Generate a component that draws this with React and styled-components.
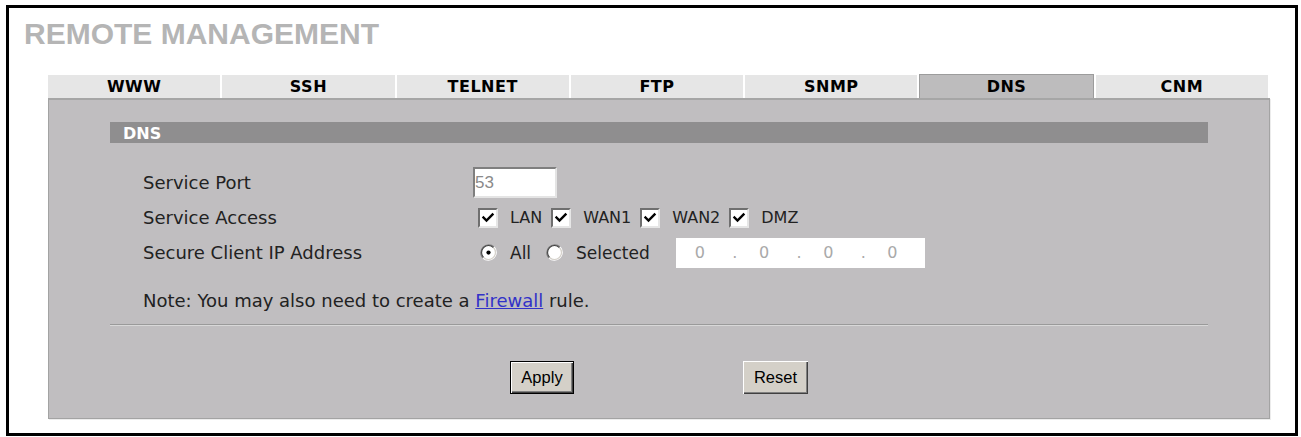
import React from 'react';
import styled, { createGlobalStyle } from 'styled-components';

const GlobalStyle = createGlobalStyle`
  body {
    margin: 0;
    background: #fff;
  }
`;

const tabs = ['WWW', 'SSH', 'TELNET', 'FTP', 'SNMP', 'DNS', 'CNM'];

const CheckMark = () => (
  <svg width="14" height="14" viewBox="0 0 14 14">
    <path d="M2.5 6.5 L5.5 9.5 L11.5 3.5" stroke="#000" strokeWidth="2.4" fill="none" strokeLinecap="square" />
  </svg>
);

const RadioIcon = ({ checked }) => (
  <svg width="17" height="17" viewBox="0 0 16 16">
    <circle cx="8" cy="8" r="6.5" fill="#fff" />
    <path d="M13.3 2.7 A7.5 7.5 0 0 0 2.7 13.3" stroke="#808080" strokeWidth="1" fill="none" />
    <path d="M2.7 13.3 A7.5 7.5 0 0 0 13.3 2.7" stroke="#fff" strokeWidth="1" fill="none" />
    <path d="M12.6 3.4 A6.5 6.5 0 0 0 3.4 12.6" stroke="#404040" strokeWidth="1" fill="none" />
    <path d="M3.4 12.6 A6.5 6.5 0 0 0 12.6 3.4" stroke="#d4d0c8" strokeWidth="1" fill="none" />
    {checked && <circle cx="8" cy="8" r="2" fill="#000" />}
  </svg>
);

function App() {
  return (
    <>
      <GlobalStyle />
      <Marco>
        <Titulo>REMOTE MANAGEMENT</Titulo>

        <BarraPestanas>
          {tabs.map((t) => (
            <Pestana key={t} activa={t === 'DNS'}>{t}</Pestana>
          ))}
        </BarraPestanas>

        <Panel>
          <Encabezado>DNS</Encabezado>

          <Formulario>
            <Etiqueta>Service Port</Etiqueta>
            <Control>
              <CampoPuerto>53</CampoPuerto>
            </Control>

            <Etiqueta>Service Access</Etiqueta>
            <Control sangria={5}>
              {['LAN', 'WAN1', 'WAN2', 'DMZ'].map((o) => (
                <Opcion key={o}>
                  <Casilla><CheckMark /></Casilla>
                  <TextoOpcion>{o}</TextoOpcion>
                </Opcion>
              ))}
            </Control>

            <Etiqueta>Secure Client IP Address</Etiqueta>
            <Control sangria={7}>
              <Opcion separacion={15}>
                <RadioIcon checked />
                <TextoOpcion grande>All</TextoOpcion>
              </Opcion>
              <Opcion separacion={0}>
                <RadioIcon />
                <TextoOpcion grande>Selected</TextoOpcion>
              </Opcion>
              <CampoIp>
                <Octeto>0</Octeto><Punto>.</Punto>
                <Octeto>0</Octeto><Punto>.</Punto>
                <Octeto>0</Octeto><Punto>.</Punto>
                <Octeto>0</Octeto>
              </CampoIp>
            </Control>
          </Formulario>

          <Nota>Note: You may also need to create a <Enlace href="#">Firewall</Enlace> rule.</Nota>

          <Separador />

          <FilaBotones>
            <Boton predeterminado>Apply</Boton>
            <Boton>Reset</Boton>
          </FilaBotones>
        </Panel>
      </Marco>
    </>
  );
}

const Marco = styled.div`
  margin: 5px 0 0 6px;
  width: 1292px;
  height: 431px;
  box-sizing: border-box;
  border: 3px solid #000;
  overflow: hidden;
`;

const Titulo = styled.h1`
  margin: 11px 0 0 15px;
  font-family: "Liberation Sans", Arial, sans-serif;
  font-size: 30px;
  line-height: 30px;
  font-weight: bold;
  color: #b5b5b5;
`;

const BarraPestanas = styled.div`
  margin: 25px 0 0 39px;
  width: 1220px;
  height: 24px;
  display: flex;
  align-items: flex-end;
  gap: 2px;
`;

const Pestana = styled.div`
  flex: 1;
  box-sizing: border-box;
  height: ${(p) => (p.activa ? '24px' : '23px')};
  background: ${(p) => (p.activa ? '#bdbcbd' : '#e6e6e6')};
  border: ${(p) => (p.activa ? '1px solid #9c9c9c' : 'none')};
  border-bottom: none;
  text-align: center;
  font-family: "DejaVu Sans", Verdana, sans-serif;
  font-weight: bold;
  font-size: 16px;
  letter-spacing: 0.5px;
  line-height: 24px;
  color: #000;
`;

const Panel = styled.div`
  margin-left: 39px;
  width: 1222px;
  height: 321px;
  box-sizing: border-box;
  background: #c0bec0;
  border: 1px solid #a3a3a3;
  border-top: 2px solid #a6a6a6;
  box-shadow: 1px 1px 0 #ececec;
  padding: 22px 61px 0 61px;
`;

const Encabezado = styled.div`
  height: 21px;
  box-sizing: border-box;
  background: #8f8e8f;
  color: #fff;
  font-family: "DejaVu Sans", Verdana, sans-serif;
  font-weight: bold;
  font-size: 16px;
  line-height: 18px;
  padding: 3px 0 0 13px;
`;

const Formulario = styled.div`
  margin-top: 22px;
  padding-left: 33px;
  display: grid;
  grid-template-columns: 330px auto;
  grid-auto-rows: 35px;
  align-items: center;
`;

const Etiqueta = styled.div`
  font-family: "DejaVu Sans", Verdana, sans-serif;
  font-size: 18px;
  line-height: 22px;
  color: #222;
`;

const Control = styled.div`
  display: flex;
  align-items: center;
  padding-left: ${(p) => p.sangria || 0}px;
`;

const CampoPuerto = styled.div`
  width: 84px;
  height: 31px;
  box-sizing: border-box;
  background: #fff;
  border-style: solid;
  border-width: 2px;
  border-color: #7f7f7f #e4e4e4 #e4e4e4 #7f7f7f;
  font-family: "Liberation Sans", Arial, sans-serif;
  font-size: 17px;
  line-height: 27px;
  color: #8a8a8a;
`;

const Opcion = styled.div`
  display: flex;
  align-items: center;
  margin-right: ${(p) => (p.separacion !== undefined ? p.separacion : 9)}px;
`;

const Casilla = styled.span`
  width: 20px;
  height: 20px;
  box-sizing: border-box;
  display: flex;
  align-items: center;
  justify-content: center;
  background: #fff;
  border-style: solid;
  border-width: 2px;
  border-color: #6f6f6f #e6e6e6 #e6e6e6 #6f6f6f;
`;

const TextoOpcion = styled.span`
  margin-left: ${(p) => (p.grande ? 13 : 12)}px;
  font-family: "DejaVu Sans", Verdana, sans-serif;
  font-size: ${(p) => (p.grande ? 17 : 16)}px;
  color: #222;
`;

const CampoIp = styled.div`
  margin-left: 26px;
  width: 249px;
  height: 30px;
  box-sizing: border-box;
  background: #fff;
  padding-left: 19px;
  display: flex;
  align-items: center;
  font-family: "DejaVu Sans", Verdana, sans-serif;
  font-size: 16px;
  color: #a9a9a9;
`;

const Octeto = styled.span`
  width: 38px;
`;

const Punto = styled.span`
  width: 27px;
`;

const Nota = styled.div`
  margin-top: 20px;
  padding-left: 33px;
  font-family: "DejaVu Sans", Verdana, sans-serif;
  font-size: 18px;
  line-height: 22px;
  color: #222;
`;

const Enlace = styled.a`
  color: #3232c8;
  text-decoration: underline;
`;

const Separador = styled.div`
  margin-top: 12px;
  border-top: 1px solid #9a9a9a;
  border-bottom: 1px solid #d8d8d8;
`;

const FilaBotones = styled.div`
  margin-top: 35px;
  display: flex;
  justify-content: center;
  gap: 169px;
`;

const Boton = styled.button`
  height: 33px;
  width: ${(p) => (p.predeterminado ? '64px' : '65px')};
  padding: 0;
  background: #d4d0c8;
  border: ${(p) => (p.predeterminado ? '1px solid #000' : 'none')};
  box-shadow: inset 1px 1px #fff, inset -1px -1px #404040, inset -2px -2px #808080;
  font-family: "Liberation Sans", Arial, sans-serif;
  font-size: 16.5px;
  color: #000;
`;

export default App;
